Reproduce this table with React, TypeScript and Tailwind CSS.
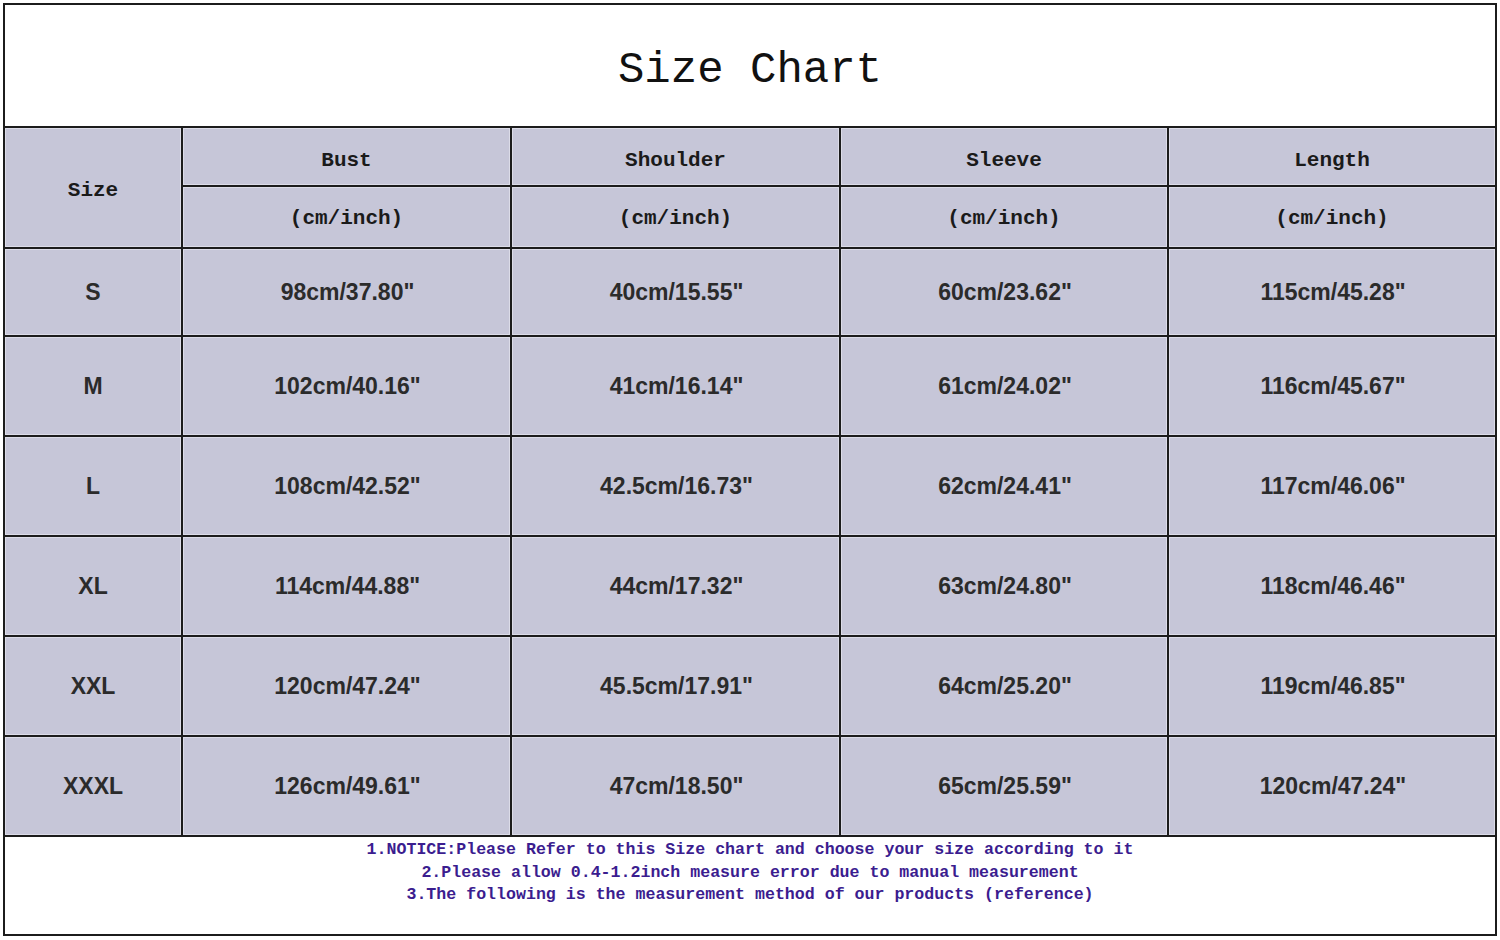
const heads = ['Bust', 'Shoulder', 'Sleeve', 'Length']

const rows = [
  ['S', '98cm/37.80"', '40cm/15.55"', '60cm/23.62"', '115cm/45.28"'],
  ['M', '102cm/40.16"', '41cm/16.14"', '61cm/24.02"', '116cm/45.67"'],
  ['L', '108cm/42.52"', '42.5cm/16.73"', '62cm/24.41"', '117cm/46.06"'],
  ['XL', '114cm/44.88"', '44cm/17.32"', '63cm/24.80"', '118cm/46.46"'],
  ['XXL', '120cm/47.24"', '45.5cm/17.91"', '64cm/25.20"', '119cm/46.85"'],
  ['XXXL', '126cm/49.61"', '47cm/18.50"', '65cm/25.59"', '120cm/47.24"'],
]

const cell = 'bg-[#c6c6d8] shadow-[inset_0_0_0_1px_#dcdce8] flex items-center justify-center'
const headText = "text-[21px] font-bold text-[#1a1a1a] font-['Liberation_Mono','DejaVu_Sans_Mono',monospace]"

export default function App() {
  return (
    <div className="w-[1500px] h-[940px] bg-white pt-[3px] pl-[3px]">
      <div className="w-[1494px] h-[933px] border-2 border-[#1c1c1c] flex flex-col">
        {/* title */}
        <div className="h-[121px] flex items-center justify-center pt-[8px]">
          <h1 className="text-[44px] text-[#111] leading-none font-['Liberation_Mono','DejaVu_Sans_Mono',monospace]">
            Size Chart
          </h1>
        </div>

        {/* table */}
        <div className="grid grid-cols-[176px_327px_327px_326px_326px] grid-rows-[57px_60px_86px_98px_98px_98px_98px_98px] gap-[2px] bg-[#1c1c1c] py-[2px]">
          <div className={`${cell} ${headText} row-span-2 pt-[6px]`}>Size</div>
          {heads.map((h) => (
            <div key={h} className={`${cell} ${headText} pt-[8px]`}>
              {h}
            </div>
          ))}
          {heads.map((h) => (
            <div key={h + '-u'} className={`${cell} ${headText} pt-[4px]`}>
              (cm/inch)
            </div>
          ))}
          {rows.map((r) =>
            r.map((v, i) => (
              <div
                key={r[0] + i}
                className={`${cell} text-[23px] font-bold text-[#2b2b2b] font-['Liberation_Sans',Arial,sans-serif] ${i === 0 ? '' : 'pl-[2px]'}`}
              >
                {v}
              </div>
            ))
          )}
        </div>

        {/* notice */}
        <div className="flex-1 flex flex-col items-center pt-[2px] text-[16.6px] leading-[22.5px] font-bold text-[#3b1d8f] font-['Liberation_Mono','DejaVu_Sans_Mono',monospace]">
          <p>1.NOTICE:Please Refer to this Size chart and choose your size according to it</p>
          <p>2.Please allow 0.4-1.2inch measure error due to manual measurement</p>
          <p>3.The following is the measurement method of our products (reference)</p>
        </div>
      </div>
    </div>
  )
}
